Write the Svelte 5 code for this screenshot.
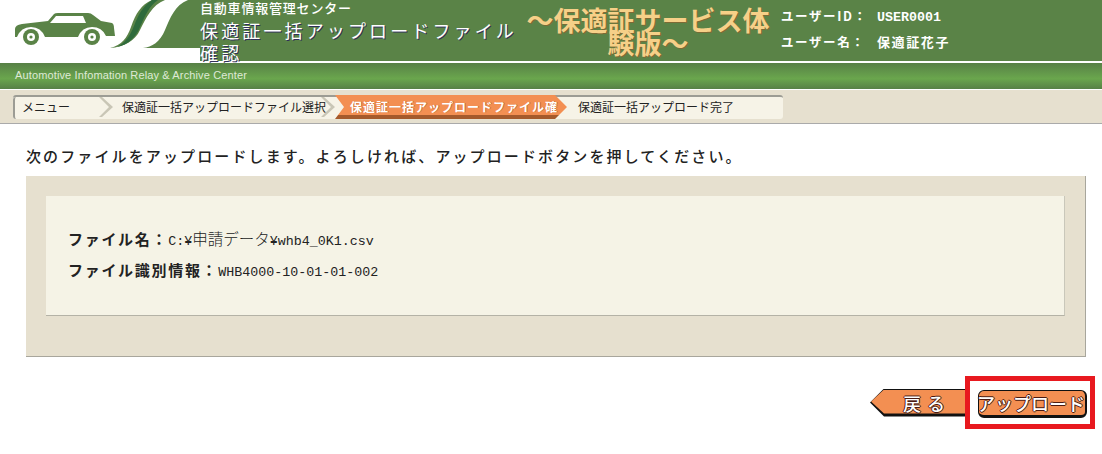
<script lang="ts">
  const steps = [
    { label: 'メニュー', width: 100, state: 'first' },
    { label: '保適証一括アップロードファイル選択', width: 222, state: '' },
    { label: '保適証一括アップロードファイル確', width: 232, state: 'current' },
    { label: '保適証一括アップロード完了', width: 216, state: 'last' }
  ];
</script>

<div class="page">
  <header class="head">
    <svg class="logo" width="200" height="61" viewBox="0 0 200 61">
      <path fill="#5a8347" d="M188 0C175 5 170 18 165 30C160 42 152 47 143 48L200 48L200 0Z" />
      <path fill="#5a8347" d="M165 0C152 5 146 18 140 30C135 41 124 47 110 48C122 45 127 38 131 27C136 13 141 5 152 0Z" />
      <path fill="#2f6b3c" d="M158 0C149 6 145 16 140 27C136 37 128 45 117 47C125 43 130 36 134 26C138 15 143 6 152 0Z" />
      <path fill="#5a8347" d="M15 37L15 29Q15 25 22 24L48 21L54 14Q55 13 58 13L88 13Q91 13 93 15L101 21L112 23Q114 24 114 28L115 36L106 36Q102 27 92 27Q82 27 78 37L45 37Q41 27 31 27Q21 27 17 37Z" />
      <path fill="#fff" d="M50 23L56 16L83 16L86 23Z" />
      <circle cx="31" cy="37" r="8" fill="#5a8347" />
      <circle cx="31" cy="37" r="4" fill="#fff" />
      <circle cx="31" cy="37" r="1.6" fill="#5a8347" />
      <circle cx="92" cy="37" r="8" fill="#5a8347" />
      <circle cx="92" cy="37" r="4" fill="#fff" />
      <circle cx="92" cy="37" r="1.6" fill="#5a8347" />
    </svg>
    <div class="titles">
      <div class="org">自動車情報管理センター</div>
      <div class="screen">保適証一括アップロードファイル確認</div>
    </div>
    <div class="trial">～保適証サービス体験版～</div>
    <dl class="user">
      <div><dt>ユーザーID：</dt><dd class="mono">USER0001</dd></div>
      <div><dt>ユーザー名：</dt><dd>保適証花子</dd></div>
    </dl>
  </header>

  <div class="band">Automotive Infomation Relay &amp; Archive Center</div>

  <nav class="crumbs">
    <ol>
      {#each steps as step}
        <li class="step {step.state}" style="width: {step.width}px">{step.label}</li>
      {/each}
    </ol>
  </nav>

  <main class="content">
    <p class="lead">次のファイルをアップロードします。よろしければ、アップロードボタンを押してください。</p>
    <section class="outer">
      <div class="inner">
        <p><b>ファイル名：</b><span class="jp"><span class="mono">C:¥</span>申請データ<span class="mono">¥whb4_0K1.csv</span></span></p>
        <p><b>ファイル識別情報：</b><span class="mono">WHB4000-10-01-01-002</span></p>
      </div>
    </section>
    <div class="actions">
      <button class="back"><span>戻 る</span></button>
      <div class="mark"><button class="upload">アップロード</button></div>
    </div>
  </main>
</div>

<style>
  :global(body) {
    margin: 0;
    background: #fff;
  }

  .page {
    width: 1102px;
    height: 454px;
    overflow: hidden;
    font-family: "Noto Sans CJK JP", "Liberation Sans", sans-serif;
    color: #222;
  }

  .head {
    display: flex;
    height: 61px;
    background: linear-gradient(90deg, #fff 200px, #5a8347 200px);
    color: #fff;
  }

  .logo {
    flex: none;
    display: block;
  }

  .titles {
    flex: none;
    width: 322px;
  }

  .org {
    font-size: 13px;
    font-weight: 500;
    line-height: 15px;
    letter-spacing: 0.8px;
  }

  .screen {
    margin-top: 4px;
    font-size: 18px;
    line-height: 22px;
    letter-spacing: 3.13px;
    text-shadow: 1px 1px 0 #30305a;
  }

  .trial {
    flex: none;
    width: 250px;
    margin-left: 1px;
    padding-top: 8px;
    box-sizing: border-box;
    text-align: center;
    font-size: 27px;
    font-weight: 700;
    line-height: 23px;
    color: #f6d088;
    text-shadow: 1px 1px 0 #7d6a35;
  }

  .user {
    margin: 6px 0 0 8px;
    font-size: 12.5px;
    font-weight: 700;
    letter-spacing: 1.6px;
    white-space: nowrap;
  }

  .user div {
    display: flex;
    align-items: baseline;
    height: 26px;
  }

  .user dt {
    width: 96px;
  }

  .user dd {
    margin: 0;
    font-size: 13px;
  }

  .user dd.mono {
    font-size: 13.33px;
    letter-spacing: 0;
  }

  .band {
    margin-top: 2px;
    height: 26px;
    box-sizing: border-box;
    padding-left: 15px;
    background: linear-gradient(#578046, #6aa64d 60%, #578046);
    color: #dfe9d6;
    font-family: "Liberation Sans", sans-serif;
    font-size: 11px;
    letter-spacing: 0.13px;
    line-height: 24px;
  }

  .crumbs {
    height: 35px;
    box-sizing: border-box;
    padding: 5px 0 0 13px;
    background: #e6e0cf;
    border-top: 1px solid #fff;
    border-bottom: 1px solid #aaa;
  }

  .crumbs ol {
    display: flex;
    width: 770px;
    margin: 0;
    padding: 0;
    list-style: none;
    background: #f6f3e7;
    border-top: 2px solid #9c9c94;
    border-radius: 3px;
  }

  .step {
    position: relative;
    box-sizing: border-box;
    height: 22px;
    padding-left: 9px;
    font-size: 12px;
    line-height: 19px;
    white-space: nowrap;
    color: #222;
  }

  .step.first {
    padding-left: 7px;
    border-left: 2px solid #9c9c94;
    border-radius: 3px 0 0 3px;
  }

  /* chevron between two steps */
  .step::after {
    content: "";
    position: absolute;
    top: 0;
    right: 0;
    width: 14px;
    height: 20px;
    background: #c9c6b6;
    clip-path: polygon(0 0, 3px 0, 100% 50%, 3px 100%, 0 100%, 10px 50%);
  }

  .step.last::after {
    display: none;
  }

  .step.current {
    margin-top: -2px;
    height: 24px;
    padding-left: 15px;
    line-height: 23px;
    color: #fff;
    font-weight: 700;
    letter-spacing: 1px;
    background: linear-gradient(#f38f52 85%, #a55a2c 85%);
    clip-path: polygon(0 0, calc(100% - 12px) 0, 100% 50%, calc(100% - 12px) 100%, 0 100%, 9px 50%);
    text-shadow: 1px 0 0 #c96a34;
  }

  .step.current::after {
    display: none;
  }

  .step.last {
    padding-left: 11px;
  }

  .content {
    padding: 0 16px 0 26px;
  }

  .lead {
    margin: 0;
    padding-top: 21px;
    height: 52px;
    box-sizing: border-box;
    font-size: 15px;
    font-weight: 500;
    line-height: 22px;
    letter-spacing: 2.12px;
    white-space: nowrap;
  }

  .outer {
    height: 181px;
    box-sizing: border-box;
    padding: 20px;
    background: #e6e0cf;
    border-right: 1px solid #a8a69c;
    border-bottom: 1px solid #a8a69c;
  }

  .inner {
    height: 120px;
    box-sizing: border-box;
    padding: 26px 22px 0;
    background: #f5f3e6;
    border-right: 1px solid #c9c7ba;
    border-bottom: 1px solid #b4b2a6;
  }

  .inner p {
    margin: 0;
    height: 32px;
    font-size: 15px;
    line-height: 32px;
    color: #222;
  }

  .inner b {
    font-weight: 700;
    letter-spacing: 1.7px;
  }

  .jp {
    font-size: 15.5px;
    font-weight: 300;
  }

  .mono {
    font-family: "Liberation Mono", monospace;
    font-size: 13.33px;
  }

  .actions {
    display: flex;
    justify-content: flex-end;
    align-items: center;
    margin: 19px -9px 0 0;
  }

  .actions button {
    height: 28px;
    padding: 0;
    border: 0;
    color: #fff;
    font: 500 18px/24px "Noto Sans CJK JP", sans-serif;
    letter-spacing: 1px;
    text-shadow: -1px 0 0 #4a1a10, 1px 0 0 #4a1a10, 0 -1px 0 #4a1a10, 0 1px 0 #4a1a10;
  }

  .back {
    position: relative;
    width: 95px;
    background: #111;
    clip-path: polygon(0 50%, 14px 0, 100% 0, 100% 100%, 14px 100%);
  }

  .back::before {
    content: "";
    position: absolute;
    inset: 1px 0 3px 1px;
    background: #f38f52;
    clip-path: polygon(0 50%, 13px 0, 100% 0, 100% 100%, 13px 100%);
  }

  .back span {
    position: relative;
    padding-left: 14px;
  }

  .mark {
    box-sizing: border-box;
    width: 130px;
    height: 53px;
    padding: 9px 0 0 8px;
    border: 5px solid #e8191f;
  }

  .upload {
    display: block;
    box-sizing: border-box;
    width: 109px;
    background: #f38f52;
    border: 1px solid #111 !important;
    border-right-width: 2px !important;
    border-bottom-width: 3px !important;
    border-radius: 6px;
    white-space: nowrap;
    letter-spacing: 0 !important;
    text-indent: -2px;
  }
</style>
